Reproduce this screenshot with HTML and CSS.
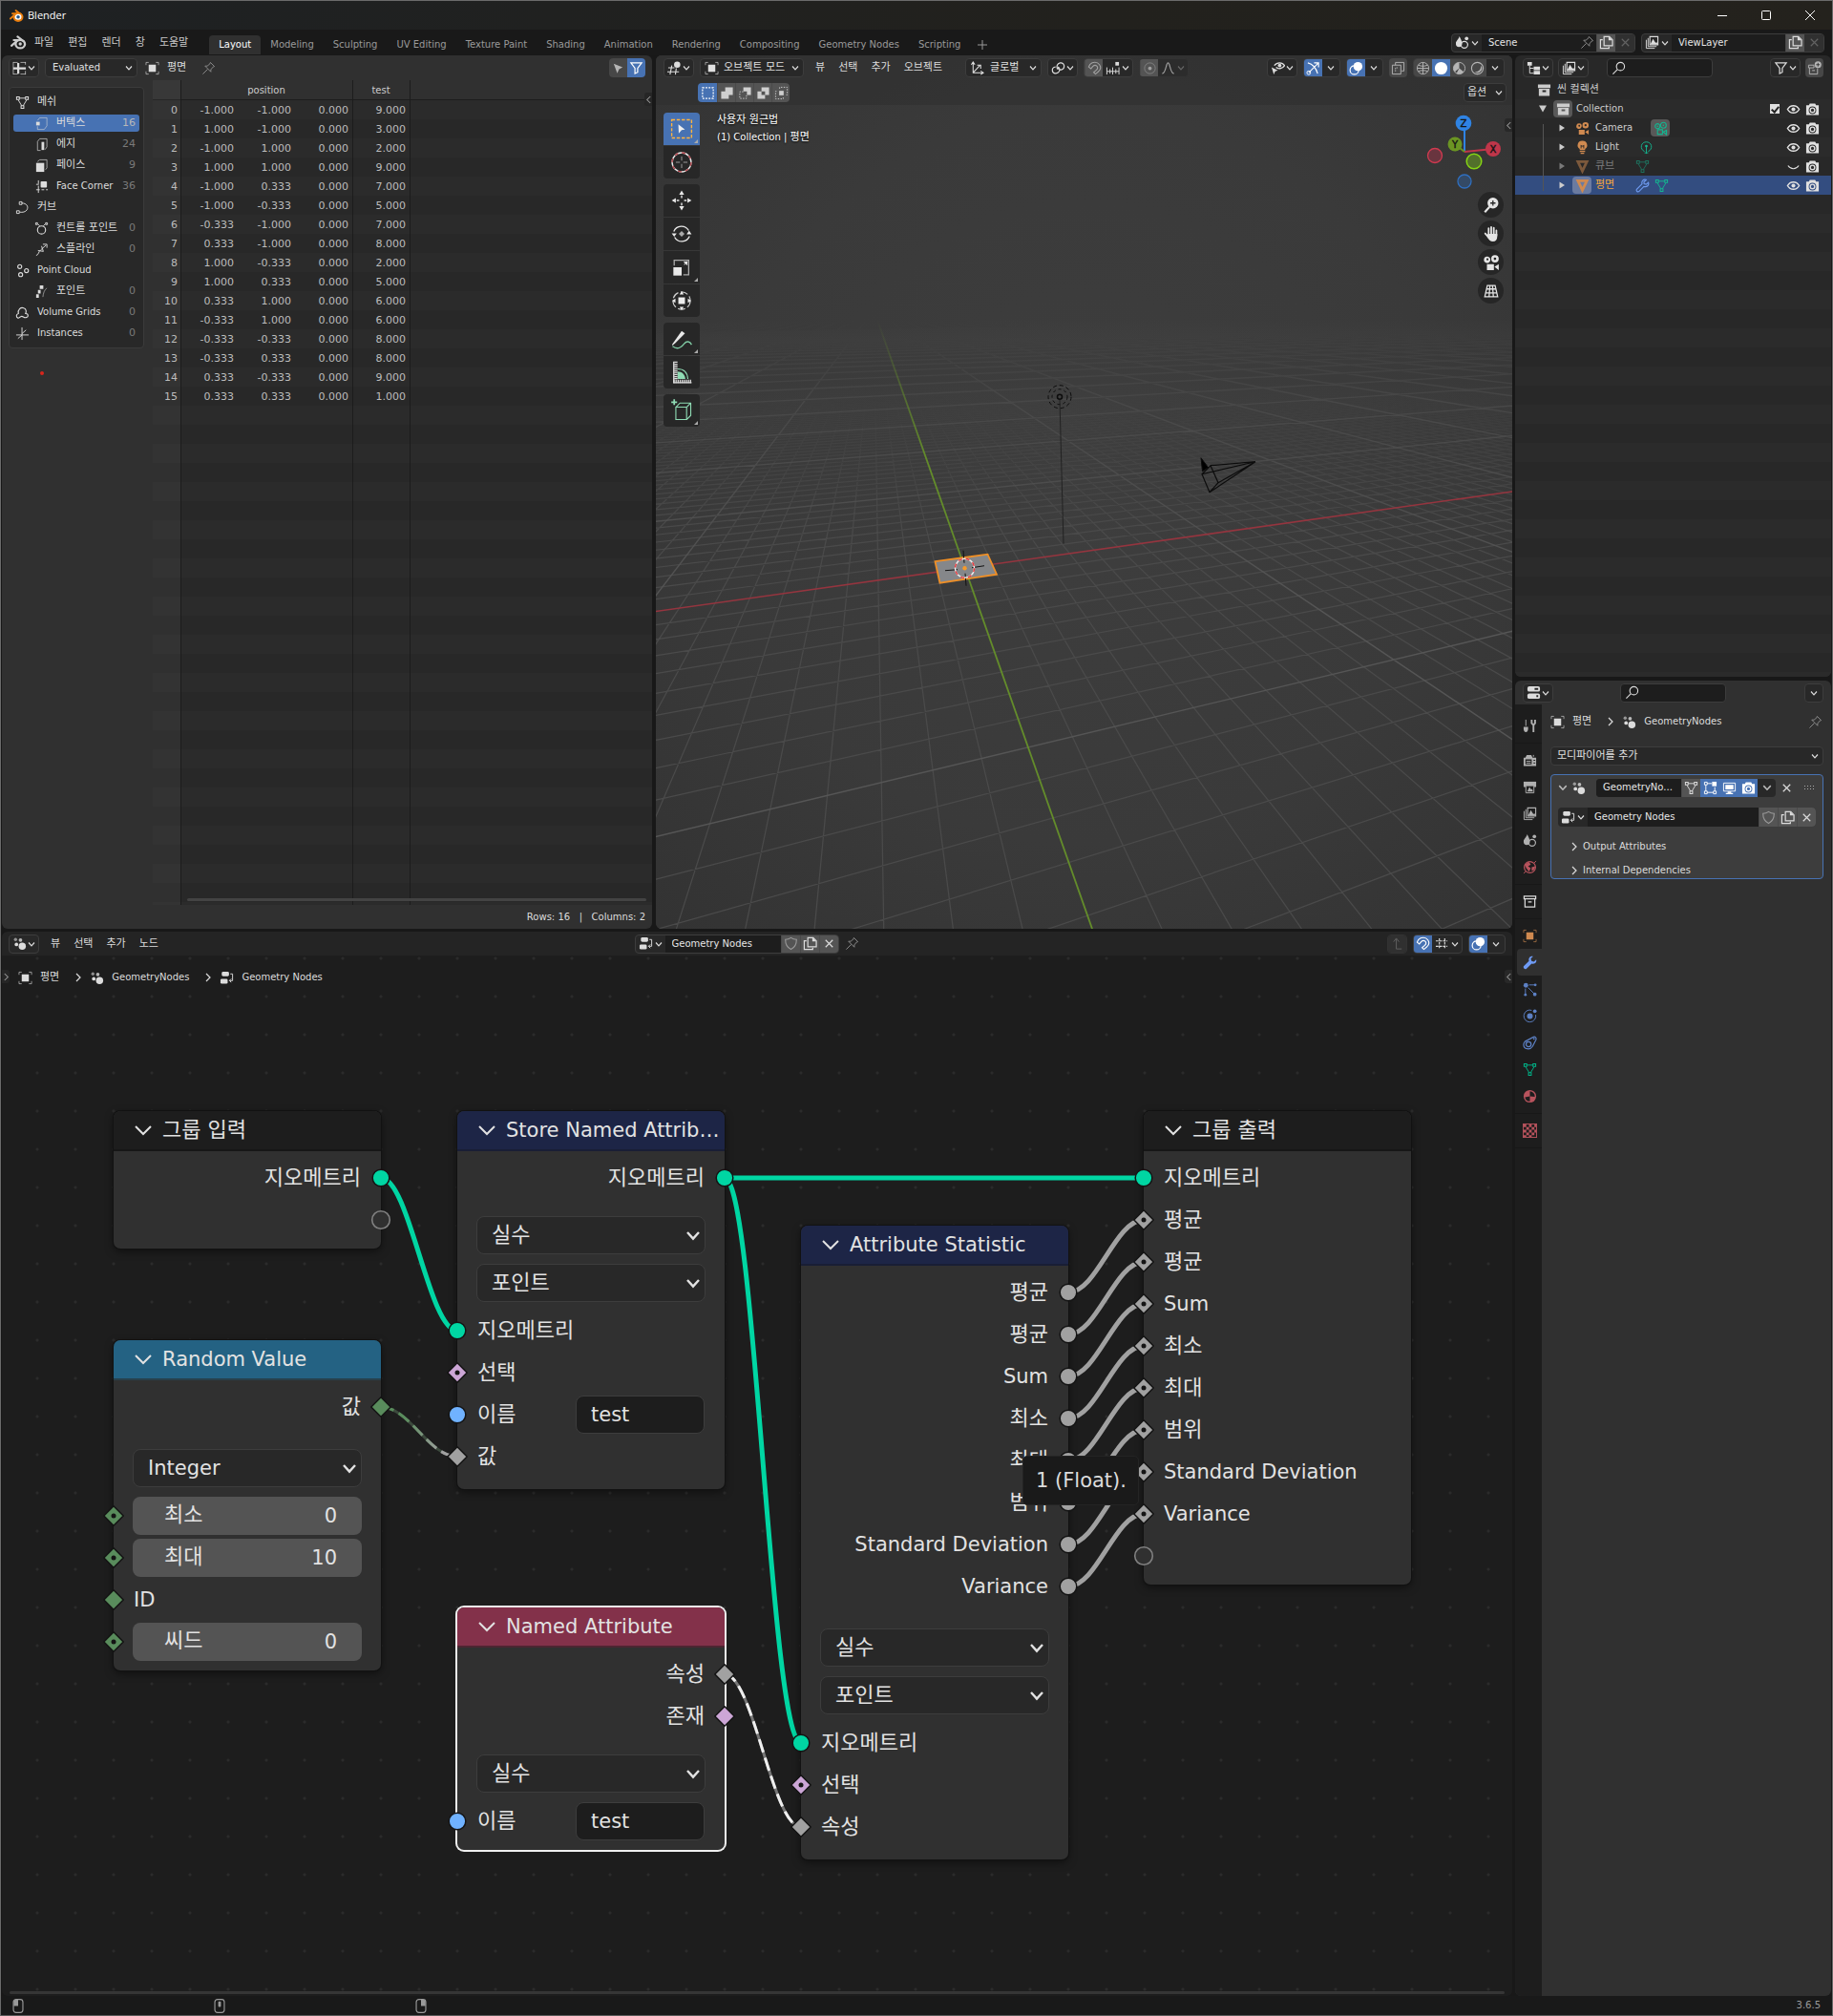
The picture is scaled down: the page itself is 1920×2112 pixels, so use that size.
FILE: index.html
```html
<!DOCTYPE html>
<html lang="ko">
<head>
<meta charset="utf-8">
<meta name="viewport" content="width=device-width, initial-scale=1">
<title>Blender</title>
<link rel="stylesheet" href="styles.css">
</head>
<body>
<svg class="sprite" aria-hidden="true">
  <symbol id="chev" viewBox="0 0 8 8"><path d="M1 2.5 4 5.8 7 2.5" fill="none" stroke="currentColor" stroke-width="1.2"/></symbol>
  <symbol id="chev-thin" viewBox="0 0 22 22"><path d="M3 7 11 15 19 7" fill="none" stroke="currentColor" stroke-width="2"/></symbol>
  <symbol id="chev-r" viewBox="0 0 8 10"><path d="M2 1 6 5 2 9" fill="none" stroke="currentColor" stroke-width="1.2"/></symbol>
  <symbol id="chev-l" viewBox="0 0 8 10"><path d="M6 1 2 5 6 9" fill="none" stroke="currentColor" stroke-width="1.2"/></symbol>
  <symbol id="blender" viewBox="0 0 16 16"><path d="M7 2.2 13 7M1 11.2 7.2 5.6H3.2" fill="none" stroke="currentColor" stroke-width="2" stroke-linecap="round" stroke-linejoin="round"/><ellipse cx="9.6" cy="9.6" rx="4.6" ry="4" fill="none" stroke="currentColor" stroke-width="2.2"/><circle cx="9.6" cy="9.4" r="1.6" fill="currentColor"/></symbol>
  <symbol id="blender-color" viewBox="0 0 16 16"><path d="M7 2.2 13 7M1 11.2 7.2 5.6H3.2" fill="none" stroke="#e87d0d" stroke-width="2" stroke-linecap="round" stroke-linejoin="round"/><ellipse cx="9.6" cy="9.4" rx="4.8" ry="4.3" fill="#fff" stroke="#e87d0d" stroke-width="2.2"/><circle cx="9.6" cy="9.4" r="1.9" fill="#265787"/></symbol>
  <symbol id="sheet" viewBox="0 0 16 16"><path d="M1 1v14M1 1.5h5M9 1.5h6M1 14.5h5M9 14.5h6M14.5 1v3M14.5 11v4" fill="none" stroke="currentColor" opacity=".7"/><path d="M1 8h14M6.5 2v12" stroke="currentColor" stroke-width="2.4"/></symbol>
  <symbol id="object" viewBox="0 0 16 16"><rect x="4" y="4" width="8" height="8" fill="currentColor"/><path d="M1 4.500V1.500h3M12 1.500h3v3M15 11.500v3h-3M4 14.500H1v-3" fill="none" stroke="currentColor" opacity=".65"/></symbol>
  <symbol id="pin" viewBox="0 0 16 16"><path d="M10 1.500 14.500 6 13 6.500 10.500 9.500 10.500 12 4 5.500 6.500 5.500 9.500 3zM7 9 1.500 14.500" fill="none" stroke="currentColor"/></symbol>
  <symbol id="arrow" viewBox="0 0 16 16"><path d="M3 3 13 7 9 9 7 13.500z" fill="currentColor"/></symbol>
  <symbol id="funnel" viewBox="0 0 16 16"><path d="M2 2h12l-4.500 6v4.500L6.500 14V8z" fill="none" stroke="currentColor" stroke-width="1.3"/></symbol>
  <symbol id="mesh" viewBox="0 0 16 16"><path d="M4.500 3h7M3.300 5 7.200 11.500M12.700 5 8.800 11.500" fill="none" stroke="currentColor"/><path d="M1.500 1.500h3v3h-3zM11.500 1.500h3v3h-3zM6.500 11.500h3v3h-3z" fill="none" stroke="currentColor" stroke-width="1.100"/></symbol>
  <symbol id="vert" viewBox="0 0 16 16"><path d="M3.500 4.500 6 1.500h8v9l-3 4H3.500V11" fill="none" stroke="currentColor" opacity=".6"/><rect x="2" y="6" width="4" height="4" fill="currentColor"/></symbol>
  <symbol id="edge" viewBox="0 0 16 16"><path d="M7 14.500H3.500V4.500L6 1.500h8v9l-2 3" fill="none" stroke="currentColor" opacity=".7"/><rect x="8" y="5" width="3" height="9" fill="currentColor"/></symbol>
  <symbol id="face" viewBox="0 0 16 16"><path d="M3.500 3.500 6 1.500h8v9l-1.500 2" fill="none" stroke="currentColor" opacity=".7"/><rect x="2" y="5" width="9" height="10" fill="currentColor"/></symbol>
  <symbol id="corner" viewBox="0 0 16 16"><path d="M4.500 1v4M2 5.500h3M4.500 7v8M2 11.500h4M8 11.500h3M13 11.500h2" fill="none" stroke="currentColor"/><rect x="7" y="2" width="7" height="7" rx="1" fill="currentColor"/></symbol>
  <symbol id="curve" viewBox="0 0 16 16"><path d="M7 3c6 0 8 4 6 7.500-1.500 2.500-5 3-8 2.500" fill="none" stroke="currentColor"/><path d="M4.500 1.500h3v3h-3zM1.500 11.500h3v3h-3z" fill="none" stroke="currentColor"/></symbol>
  <symbol id="cpoint" viewBox="0 0 16 16"><circle cx="8" cy="9.500" r="4.500" fill="none" stroke="currentColor" stroke-width="1.200"/><path d="M1.500 1.500h2v2h-2zM12.500 1.500h2v2h-2zM4 3l2 2M12 3l-2 2" fill="none" stroke="currentColor"/></symbol>
  <symbol id="spline" viewBox="0 0 16 16"><path d="M2 14.500C5 14 4.500 10 7 8.500M7 8.500 13 3M4 9l6 1M8 4l2 6M9.500 2H14v4" fill="none" stroke="currentColor"/></symbol>
  <symbol id="cloud" viewBox="0 0 16 16"><g fill="none" stroke="currentColor" stroke-width="1.200"><circle cx="5" cy="3.500" r="2.200"/><circle cx="12.500" cy="8" r="2.200"/><circle cx="6" cy="12.500" r="2.200"/></g></symbol>
  <symbol id="points" viewBox="0 0 16 16"><path d="M6 1h4v4H6zM4 6h3v4H4zM2 11h3v4H2z" fill="currentColor"/><path d="M14 4c-3 2-4 6-4.500 10" fill="none" stroke="currentColor" opacity=".6"/></symbol>
  <symbol id="volume" viewBox="0 0 16 16"><path d="M3 14C.5 13 1 9.500 3.500 9 2.500 5 6 1.500 9.500 3c3 1 3 4 2 6 3.500 0 3.500 4 .5 4.500C9 14 8.500 11 6 12.500 5 13 4 14.500 3 14z" fill="none" stroke="currentColor" stroke-width="1.200"/></symbol>
  <symbol id="inst" viewBox="0 0 16 16"><path d="M7.500 1v14M1 9.500h14M7.500 9.500 3 13.500M7.500 8 12 4" fill="none" stroke="currentColor"/></symbol>
  <symbol id="view3d" viewBox="0 0 16 16"><path d="M1 7.500h7M0 12h13M5 5 3 15M10 8l-1 7" fill="none" stroke="currentColor" stroke-width="1.200"/><circle cx="11" cy="4" r="3.500" fill="currentColor"/></symbol>
  <symbol id="orient" viewBox="0 0 16 16"><path d="M3.500 2v11h11M1.500 4l2-3 2 3M12 11l3 2-3 2M3.500 13 11 5M8 4.500h4v4" fill="none" stroke="currentColor" stroke-width="1.100"/></symbol>
  <symbol id="pivot" viewBox="0 0 16 16"><path d="M5 6.500C2 6.500 1 9 1.500 11c.5 3 5.500 4 7.500.5 1-2 0-4-1.500-5M7 9C5.500 6 7 2.500 10 2c3-.5 5 2 4.500 4.500C14 9 12 10 10 9.500" fill="none" stroke="currentColor" stroke-width="1.300"/><circle cx="8" cy="8" r="1.300" fill="currentColor"/></symbol>
  <symbol id="magnet" viewBox="0 0 16 16"><path d="M1.500 6.500 3 3.500C6 .5 11 .5 13.500 4c2 3 1 6-1.500 8l-3 2.500-2-2L10 10c1.500-1.500 2-3 .5-4.500-1.500-1.300-3-1-4.500.5L4 8.500z" fill="none" stroke="currentColor" stroke-width="1.200"/></symbol>
  <symbol id="snapinc" viewBox="0 0 16 16"><path d="M1.500 7v8M5 9v5M8 7v8M11.500 9v5M15 7v8M1.500 11.500H15" fill="none" stroke="currentColor"/><rect x="11" y="1" width="4" height="4" fill="currentColor"/></symbol>
  <symbol id="prop" viewBox="0 0 16 16"><circle cx="8" cy="8" r="6" fill="none" stroke="currentColor" opacity=".6"/><circle cx="8" cy="8" r="2" fill="currentColor"/></symbol>
  <symbol id="falloff" viewBox="0 0 16 16"><path d="M1.500 14C6 13 5.500 2 8 2s2 11 6.500 12" fill="none" stroke="currentColor" stroke-width="1.200"/></symbol>
  <symbol id="eyecur" viewBox="0 0 16 16"><path d="M4 5C7 1 13 1 15.500 5 13 9 8 9 6 7" fill="none" stroke="currentColor" stroke-width="1.400"/><circle cx="10" cy="4.800" r="2" fill="currentColor"/><path d="M1 7 8 10.500 5 11.500 3.500 15z" fill="currentColor"/></symbol>
  <symbol id="gizmo" viewBox="0 0 16 16"><path d="M3 13 14 2M9 2h5v5M2 2c4 1 9 5 11 12" fill="none" stroke="currentColor" stroke-width="1.200"/><circle cx="3" cy="13" r="2" fill="none" stroke="currentColor"/></symbol>
  <symbol id="overlay" viewBox="0 0 16 16"><circle cx="10" cy="6" r="5" fill="currentColor"/><circle cx="6" cy="10" r="4.800" fill="none" stroke="currentColor" stroke-width="1.300"/></symbol>
  <symbol id="xray" viewBox="0 0 16 16"><path d="M5 4.500V1.500h9.500V11H12" fill="none" stroke="currentColor"/><path d="M1.500 4.500H11v10H1.500z" fill="none" stroke="currentColor"/><path d="M5 11.500V7.500h3" fill="none" stroke="currentColor" stroke-dasharray="1.500 1"/></symbol>
  <symbol id="wire" viewBox="0 0 16 16"><g fill="none" stroke="currentColor"><circle cx="8" cy="8" r="6.500"/><path d="M1.500 8h13M8 1.500v13M3 4.500c3 1.500 7 1.500 10 0M3 11.500c3-1.500 7-1.500 10 0"/></g></symbol>
  <symbol id="solid" viewBox="0 0 16 16"><circle cx="8" cy="8" r="7" fill="currentColor"/></symbol>
  <symbol id="matp" viewBox="0 0 16 16"><circle cx="8" cy="8" r="6.500" fill="none" stroke="currentColor"/><path d="M8 1.500A6.500 6.500 0 0 0 3 12L8 8zM8 8l5 4a6.500 6.500 0 0 1-8 1.500z" fill="currentColor"/></symbol>
  <symbol id="rendered" viewBox="0 0 16 16"><circle cx="8" cy="8" r="6.500" fill="none" stroke="currentColor" stroke-width="1.200"/><path d="M12 5c0 5-3 7-7 7a5 5 0 0 0 7-7z" fill="currentColor"/></symbol>
  <symbol id="s-new" viewBox="0 0 16 16"><rect x="2" y="2" width="12" height="12" fill="none" stroke="currentColor" stroke-width="1.300" stroke-dasharray="2 1.400"/></symbol>
  <symbol id="s-add" viewBox="0 0 16 16"><path d="M6 1.500h8.500V10H10v4.500H1.500V6H6z" fill="currentColor"/></symbol>
  <symbol id="s-sub" viewBox="0 0 16 16"><path d="M6 1.500h8.500V10H10V6H6z" fill="currentColor"/><path d="M6 6.500H2v7.500h7.500V10" fill="none" stroke="currentColor" stroke-dasharray="1.500 1.500"/></symbol>
  <symbol id="s-inv" viewBox="0 0 16 16"><path fill-rule="evenodd" d="M6 1.500h8.500V10H10v4.500H1.500V6H6zM6 6v4h4V6z" fill="currentColor"/></symbol>
  <symbol id="s-int" viewBox="0 0 16 16"><rect x="5.500" y="5.500" width="5" height="5" fill="currentColor"/><path d="M6 3V1.500h8.500V10H12M10 13v1.500H1.500V6H4" fill="none" stroke="currentColor" stroke-dasharray="1.500 1.500"/></symbol>
  <symbol id="scene" viewBox="0 0 16 16"><path d="M5 1C7 5 8 7 8 9a3.500 4 0 0 1-7 0C1 6 4 5 5 1z" fill="currentColor"/><circle cx="13" cy="3.500" r="2" fill="currentColor"/><circle cx="10.500" cy="10.500" r="3.800" fill="none" stroke="currentColor" stroke-width="1.300"/></symbol>
  <symbol id="copy" viewBox="0 0 16 16"><path d="M5.500 1.500h6L15 5v6.500H5.500z" fill="none" stroke="currentColor" stroke-width="1.300"/><path d="M10.500 1v4.500H15z" fill="currentColor"/><path d="M4 5H1.500v9.500H11V12.500" fill="none" stroke="currentColor" stroke-width="1.300"/></symbol>
  <symbol id="x" viewBox="0 0 16 16"><path d="M4 4l8 8M12 4l-8 8" stroke="currentColor" stroke-width="1.300"/></symbol>
  <symbol id="layers" viewBox="0 0 16 16"><path d="M5.500 1.500h9v9h-9z" fill="none" stroke="currentColor" stroke-width="1.200"/><path d="M6 10l3-6 3 4.500 1-1 1.500 2.500z" fill="currentColor"/><path d="M3.500 3v9.500H13M1.500 5v9.500H11" fill="none" stroke="currentColor"/></symbol>
  <symbol id="tree" viewBox="0 0 16 16"><path d="M1 1h5v4H1zM8 6h7v4H8zM8 11h7v4H8z" fill="currentColor"/><path d="M3.500 5v8.500H8M3.500 8H8" fill="none" stroke="currentColor"/></symbol>
  <symbol id="search" viewBox="0 0 16 16"><circle cx="10" cy="6" r="4.500" fill="none" stroke="currentColor" stroke-width="1.200"/><path d="M6.500 9.500 1.500 14.500" stroke="currentColor" stroke-width="1.200"/></symbol>
  <symbol id="newcol" viewBox="0 0 16 16"><path d="M2.500 7.500V14.500h9V8M1.500 4.500h6v3h-6zM5.500 10.500h3" fill="none" stroke="currentColor"/><circle cx="12" cy="4" r="3.800" fill="currentColor"/><path d="M12 2v4M10 4h4" stroke="#333"/></symbol>
  <symbol id="coll" viewBox="0 0 16 16"><path d="M1 1.500h14v4H1z" fill="currentColor"/><path fill-rule="evenodd" d="M2 6.500h12v8H2zM6 8v2h4V8z" fill="currentColor"/></symbol>
  <symbol id="coll-o" viewBox="0 0 16 16"><path d="M1.500 2h13v3h-13zM2.500 5v9h11V5M6 8.500h4" fill="none" stroke="currentColor" stroke-width="1.300"/></symbol>
  <symbol id="tri-d" viewBox="0 0 8 10"><path d="M0 1.500h8L4 8.500z" fill="currentColor"/></symbol>
  <symbol id="tri-r" viewBox="0 0 8 10"><path d="M1.500 1.500 7 5 1.500 8.500z" fill="currentColor"/></symbol>
  <symbol id="cam" viewBox="0 0 16 16"><path fill-rule="evenodd" d="M4.500 2.500a3 3 0 1 1-1 5.900 3 3 0 0 1 1-5.900zM3.500 5a1 1 0 1 0 2 0 1 1 0 0 0-2 0zM11.500 1a3.500 3.500 0 1 1 0 7 3.500 3.500 0 0 1 0-7zM10.300 4.500a1.200 1.200 0 1 0 2.400 0 1.200 1.200 0 0 0-2.400 0z" fill="currentColor"/><path d="M4 9.500h6.500V15H4zM11 12l4-2.500V15z" fill="currentColor"/></symbol>
  <symbol id="cam-o" viewBox="0 0 16 16"><g fill="none" stroke="currentColor" stroke-width="1.200"><circle cx="4.500" cy="5.500" r="2.700"/><circle cx="11" cy="4.500" r="3.200"/><path d="M4.500 9.500H10V14.500H4.500zM11 12l3.500-2v5z"/></g><circle cx="4.500" cy="5.500" r=".8" fill="currentColor"/><circle cx="11" cy="4.500" r=".8" fill="currentColor"/></symbol>
  <symbol id="bulb" viewBox="0 0 16 16"><path fill-rule="evenodd" d="M8 .5a5 5 0 0 1 3 9.200V11H5V9.700A5 5 0 0 1 8 .5zM6 5v4h1V7h2v2h1V5L8 6z" fill="currentColor"/><path d="M5 12.500h6M6 14.500h4" stroke="currentColor" stroke-width="1.300"/></symbol>
  <symbol id="bulb-o" viewBox="0 0 16 16"><path d="M6 12.500C3 11 2 8.500 2.500 6c1-5.500 10-5.500 11 0 .5 2.500-.5 5-3.500 6.500M8 6v9M6 14h4" fill="none" stroke="currentColor"/><circle cx="8" cy="6.500" r="1.500" fill="currentColor"/></symbol>
  <symbol id="tri-o" viewBox="0 0 16 16"><path d="M3 2.500h10L8 13z" fill="none" stroke="currentColor" stroke-width="3"/></symbol>
  <symbol id="wrench" viewBox="0 0 16 16"><path d="M14.500 4.500 12 6.500 9.800 6 9.500 4 12 1.500C9 .5 6.500 3 7.500 6L1.500 12c-1 2 1 3.500 2.500 2.500L9.500 9c3.500 1 6-1.500 5-4.500z" fill="none" stroke="currentColor" stroke-width="1.200"/></symbol>
  <symbol id="wrench-f" viewBox="0 0 16 16"><path d="M15 4.500 12.500 7 9.800 6.200 9 3.500 11.500 1C8.500.2 6 3 7 6L1 12c-1 2 1.500 4 3 3L10 9c3.500 1 6-1.500 5-4.500z" fill="currentColor"/></symbol>
  <symbol id="eye" viewBox="0 0 16 16"><path d="M1.500 8C4.500 2.500 11.500 2.500 14.500 8 11.500 13.500 4.500 13.500 1.500 8z" fill="none" stroke="currentColor" stroke-width="1.600"/><circle cx="8" cy="8" r="2.200" fill="currentColor"/></symbol>
  <symbol id="eye-c" viewBox="0 0 16 16"><path d="M2 7c3 4.500 9 4.500 12 0" fill="none" stroke="currentColor" stroke-width="1.200"/></symbol>
  <symbol id="photo" viewBox="0 0 16 16"><path fill-rule="evenodd" d="M1 3.500h3L5 1.500h6l1 2h3V14.500H1zM8 4.800a4.200 4.200 0 1 0 0 8.400 4.200 4.200 0 0 0 0-8.400z" fill="currentColor"/><circle cx="8" cy="9" r="2.500" fill="none" stroke="currentColor" stroke-width="1.500"/></symbol>
  <symbol id="props" viewBox="0 0 16 16"><rect x="1" y="1" width="14" height="6" rx="2" fill="currentColor"/><rect x="1" y="9" width="14" height="6" rx="2" fill="currentColor"/><path d="M9 3h4v2H9zM11 11h2v2h-2z" fill="#282828"/></symbol>
  <symbol id="tools" viewBox="0 0 16 16"><path d="M3.500 1v7" stroke="currentColor"/><path d="M13.800 1v4L12 7v8M10 1v4l2 2" fill="none" stroke="currentColor" stroke-width="2"/><path d="M1 9h5v2c0 2.500-1 4-2.500 4S1 13.500 1 11z" fill="currentColor"/></symbol>
  <symbol id="render" viewBox="0 0 16 16"><path fill-rule="evenodd" d="M1 5h2l1.500-3h5L11 5h4v9.500H1zM3 7v5.500h7V7z" fill="currentColor"/><path d="M4 9h5M4 11h5M12 2v2" stroke="currentColor"/><path d="M12 8h2M12 11h2" stroke="#1d1d1d"/></symbol>
  <symbol id="output" viewBox="0 0 16 16"><path d="M1 2h14v6H1z" fill="currentColor"/><path d="M3.500 6.500h9V14.500h-9z" fill="#1d1d1d" stroke="currentColor"/><path d="M5 13l2.500-5 2 3 1-1 1 3z" fill="currentColor"/></symbol>
  <symbol id="world" viewBox="0 0 16 16"><circle cx="8" cy="8" r="6.300" fill="none" stroke="currentColor" stroke-width="1.300"/><path d="M2 5 7 2l2 3-3 2 3 2-2 4-3-4zM10 8l4-1-1 4-3 1z" fill="currentColor"/><path d="M12.500 3.500 15 1M3.500 12.500 1 15" stroke="currentColor"/></symbol>
  <symbol id="parts" viewBox="0 0 16 16"><circle cx="3.500" cy="3.500" r="2.600" fill="currentColor"/><circle cx="14" cy="3" r="1.500" fill="currentColor"/><circle cx="3" cy="14" r="1.500" fill="currentColor"/><circle cx="13.500" cy="13.500" r="2" fill="currentColor"/><path d="M7 3h6M3 7v6M6 6l7 7" stroke="currentColor"/></symbol>
  <symbol id="phys" viewBox="0 0 16 16"><circle cx="8" cy="8" r="3.200" fill="currentColor"/><circle cx="13.500" cy="2.500" r="2" fill="currentColor"/><path d="M10 1.500A6.700 6.700 0 1 0 14.500 6.500" fill="none" stroke="currentColor"/></symbol>
  <symbol id="constr" viewBox="0 0 16 16"><path d="M2.500 6.500 12 1.500c2-.7 3.500 1 2.800 3L11 12C8 16.500 1 15 1 10c0-1.500.5-2.500 1.500-3.500z" fill="none" stroke="currentColor" stroke-width="1.300"/><circle cx="6.500" cy="9.500" r="2.800" fill="none" stroke="currentColor" stroke-width="1.400"/><circle cx="12.500" cy="3.500" r="1" fill="currentColor"/></symbol>
  <symbol id="mater" viewBox="0 0 16 16"><circle cx="8" cy="8" r="7" fill="currentColor"/><path d="M8 2.500a5.500 5.500 0 0 1 5.500 6L8 8zM8 8v5.500A5.500 5.500 0 0 1 2.500 9z" fill="#1d1d1d"/></symbol>
  <symbol id="texture" viewBox="0 0 16 16"><rect x=".5" y=".5" width="15" height="15" fill="none" stroke="currentColor"/><path d="M1 1h3v3H1zM7 1h3v3H7zM13 1h2v3h-2zM4 4h3v3H4zM10 4h3v3h-3zM1 7h3v3H1zM7 7h3v3H7zM13 7h2v3h-2zM4 10h3v3H4zM10 10h3v3h-3zM1 13h3v2H1zM7 13h3v2H7z" fill="currentColor"/></symbol>
  <symbol id="geo" viewBox="0 0 16 16"><circle cx="11" cy="11" r="4" fill="currentColor"/><circle cx="4.500" cy="9" r="2" fill="currentColor"/><circle cx="9" cy="4" r="2" fill="currentColor" opacity=".8"/><circle cx="3.500" cy="3.500" r="1.800" fill="currentColor" opacity=".6"/></symbol>
  <symbol id="ntree" viewBox="0 0 16 16"><rect x="2.500" y="1" width="8" height="5" rx="1.500" fill="currentColor"/><rect x="1" y="9" width="8" height="5.500" rx="1.500" fill="currentColor"/><path d="M12 3.500h2.500V11H11M13 9l-2 2 2 2" fill="none" stroke="currentColor"/></symbol>
  <symbol id="shield" viewBox="0 0 16 16"><path d="M8 1.500C6 3 4 3.500 1.800 3.500c0 6 2 9 6.200 11 4.200-2 6.200-5 6.200-11C12 3.500 10 3 8 1.500z" fill="none" stroke="currentColor" stroke-width="1.200"/></symbol>
  <symbol id="edit" viewBox="0 0 16 16"><path d="M4.500 3h5M3 4.500v7M4.500 13h7M13 7v4.500" stroke="currentColor"/><path d="M1.500 1.500h3v3h-3zM1.500 11.500h3v3h-3zM11.500 11.500h3v3h-3z" fill="none" stroke="currentColor"/><rect x="10" y="1" width="5" height="5" fill="#fff"/></symbol>
  <symbol id="monitor" viewBox="0 0 16 16"><path d="M1.500 2.500h13v9h-13z" fill="none" stroke="currentColor"/><path d="M3.500 4.500h9v5h-9zM6 12h4v1.500h2V15H4v-1.500h2z" fill="currentColor"/></symbol>
  <symbol id="parent" viewBox="0 0 16 16"><path d="M13 14H7V3M4 6l3-4 3 4" fill="none" stroke="currentColor"/></symbol>
  <symbol id="gsnap" viewBox="0 0 16 16"><path d="M5 2v12M11 2v12M1 5h13M1 11h13" stroke="currentColor" stroke-width="1.200" stroke-dasharray="3 1"/></symbol>
  <symbol id="m-l" viewBox="0 0 12 16"><rect x=".7" y=".7" width="10.600" height="14.600" rx="3" fill="none" stroke="currentColor" stroke-width="1.200"/><path d="M1 8V3q0-2 2-2h3v7z" fill="currentColor"/></symbol>
  <symbol id="m-m" viewBox="0 0 12 16"><rect x=".7" y=".7" width="10.600" height="14.600" rx="3" fill="none" stroke="currentColor" stroke-width="1.200"/><rect x="4.500" y="3" width="3" height="6" rx="1" fill="currentColor"/></symbol>
  <symbol id="m-r" viewBox="0 0 12 16"><rect x=".7" y=".7" width="10.600" height="14.600" rx="3" fill="none" stroke="currentColor" stroke-width="1.200"/><path d="M11 8V3q0-2-2-2H6v7z" fill="currentColor"/></symbol>
  <symbol id="t-sel" viewBox="0 0 30 30"><rect x="3" y="4" width="24" height="22" fill="none" stroke="#ffb340" stroke-width="1.600" stroke-dasharray="4 2"/><path d="M11 9.500 19 16 15 16.500 11.500 20.500z" fill="#eee"/></symbol>
  <symbol id="t-cur" viewBox="0 0 30 30"><circle cx="15" cy="15" r="11.500" fill="none" stroke="#e8e8e8" stroke-width="1.600"/><circle cx="15" cy="15" r="11.500" fill="none" stroke="#b5484f" stroke-width="1.600" stroke-dasharray="4.500 4.500"/><path d="M15 8v5M15 17v5M8 15h5M17 15h5" stroke="#aaa"/></symbol>
  <symbol id="t-move" viewBox="0 0 30 30"><path d="M15 3l3 5h-6zM15 27l3-5h-6zM3 15l5-3v6zM27 15l-5-3v6z" fill="#e8e8e8"/><path d="M15 9v3M15 18v3M9 15h3M18 15h3" stroke="#e8e8e8" stroke-width="1.600"/></symbol>
  <symbol id="t-rot" viewBox="0 0 30 30"><path d="M5.500 12a10 10 0 0 1 18-1M24.500 18a10 10 0 0 1-18 1" fill="none" stroke="#e8e8e8" stroke-width="1.500"/><path d="M3 14.500h6L6 18.500zM27 15.500h-6L24 11z" fill="#e8e8e8"/><path d="M15 11.500l3.500 3.500-3.500 3.500-3.500-3.500z" fill="#aaa"/></symbol>
  <symbol id="t-scale" viewBox="0 0 30 30"><path d="M6 13V6.500h17.500V24H17M18 12l4-4" fill="none" stroke="#aaa" stroke-width="1.500"/><rect x="5" y="15" width="10" height="10" fill="#e8e8e8"/><path d="M22 8v5l-5-5z" fill="#e8e8e8"/></symbol>
  <symbol id="t-xf" viewBox="0 0 30 30"><circle cx="15" cy="15" r="10.500" fill="none" stroke="#ccc" stroke-width="1.300" stroke-dasharray="9 3"/><rect x="11" y="11" width="8" height="8" fill="#eee"/><path d="M15 3.500l2.500 4h-5zM15 26.500l2.500-4h-5zM3.500 15l4-2.500v5zM26.500 15l-4-2.500v5z" fill="#eee"/></symbol>
  <symbol id="t-note" viewBox="0 0 30 30"><path d="M4 24C11 29 15 25 18 21s7-3 9 1" fill="none" stroke="#7fcba4" stroke-width="1.600"/><path d="M4 21 15 5.500l4 3L7.500 20 3.500 23.500z" fill="#e8e8e8"/></symbol>
  <symbol id="t-meas" viewBox="0 0 30 30"><path d="M10 23V14c6 0 9 4 9.500 9z" fill="#8fdbb4"/><path d="M10 11c8 0 12 5 12.500 12" fill="none" stroke="#8fdbb4" stroke-width="1.300"/><path d="M5.500 2v26" stroke="#ddd" stroke-width="1.600"/><path d="M8 2v22" stroke="#ddd" stroke-width="4" stroke-dasharray="1.500 1"/><path d="M5 26h22" stroke="#ddd" stroke-width="4" stroke-dasharray="1.500 1"/><path d="M5 27.500h22" stroke="#ddd" stroke-width="1.400"/></symbol>
  <symbol id="t-cube" viewBox="0 0 30 30"><path d="M8 11h13v15H8zM8 11l5-5h13v15l-5 5M21 11l5-5" fill="none" stroke="#8fdbb4" stroke-width="1.300"/><path d="M6 1.500v7M2.500 5h7" stroke="#8fdbb4" stroke-width="2"/></symbol>
  <symbol id="zoom" viewBox="0 0 20 20"><circle cx="12" cy="7.500" r="6.300" fill="currentColor"/><path d="M8 12 2.500 18" stroke="currentColor" stroke-width="2.400"/><path d="M12 4.500v6M9 7.500h6" stroke="#262626" stroke-width="1.400"/></symbol>
  <symbol id="hand" viewBox="0 0 20 20"><path d="M7 11V3.500M10 10V2M13 11V3M16 12V6M3 9.500 7 14" fill="none" stroke="currentColor" stroke-width="2" stroke-linecap="round"/><path d="M6 10h11v3c0 4-2 6-5 6s-5-2-7-6z" fill="currentColor"/></symbol>
  <symbol id="persp" viewBox="0 0 20 20"><path d="M5.500 3.500h9l3 13h-15zM4.500 7.500h11M3.500 12h13M8.500 3.500l-1 13M11.500 3.500l1 13" fill="none" stroke="currentColor" stroke-width="1.400"/></symbol>
  <symbol id="k-c" viewBox="0 0 22 22"><circle cx="11" cy="11" r="8.800" fill="currentColor" stroke="#141414" stroke-width="1.500"/></symbol>
  <symbol id="k-d" viewBox="0 0 22 22"><path d="M11 .8 21.200 11 11 21.200.8 11z" fill="currentColor" stroke="#141414" stroke-width="1.500"/></symbol>
  <symbol id="k-dd" viewBox="0 0 22 22"><path d="M11 .8 21.200 11 11 21.200.8 11z" fill="currentColor" stroke="#141414" stroke-width="1.500"/><circle cx="11" cy="11" r="2.500" fill="#141414"/></symbol>
  <symbol id="k-e" viewBox="0 0 22 22"><circle cx="11" cy="11" r="9.300" fill="#303030" stroke="#808080" stroke-width="1.600"/></symbol>
</svg>

<div class="app">
  <header class="titlebar">
    <svg class="i"><use href="#blender-color"/></svg><h1>Blender</h1>
    <div class="winbtns">
      <button aria-label="최소화"><svg viewBox="0 0 12 12"><path d="M1 6.500h10" stroke="#fff"/></svg></button>
      <button aria-label="최대화"><svg viewBox="0 0 12 12"><rect x="1.500" y="1.500" width="9" height="9" rx="1" fill="none" stroke="#fff"/></svg></button>
      <button aria-label="닫기"><svg viewBox="0 0 12 12"><path d="M1 1l10 10M11 1 1 11" stroke="#fff"/></svg></button>
    </div>
  </header>

  <div class="topbar">
    <nav class="mainmenu ko">
      <button aria-label="Blender"><svg class="i"><use href="#blender"/></svg></button>
      <button>파일</button><button>편집</button><button>렌더</button><button>창</button><button>도움말</button>
    </nav>
    <nav class="tabs">
      <button class="on">Layout</button><button>Modeling</button><button>Sculpting</button><button>UV Editing</button><button>Texture Paint</button><button>Shading</button><button>Animation</button><button>Rendering</button><button>Compositing</button><button>Geometry Nodes</button><button>Scripting</button><button class="plus" aria-label="추가"><svg viewBox="0 0 10 10"><path d="M5 0v10M0 5h10" stroke="currentColor"/></svg></button>
    </nav>
    <div class="datablocks">
      <div class="grp">
        <button class="w31" aria-label="Scene"><svg class="i"><use href="#scene"/></svg><svg class="c"><use href="#chev"/></svg></button>
        <input class="name" aria-label="Scene" value="Scene">
        <button class="w20 pinned" aria-label="고정"><svg class="i dim"><use href="#pin"/></svg></button>
        <button class="w20 lit" aria-label="복사"><svg class="i"><use href="#copy"/></svg></button>
        <button class="w20 off" aria-label="삭제"><svg class="i"><use href="#x"/></svg></button>
      </div>
      <div class="grp">
        <button class="w31" aria-label="ViewLayer"><svg class="i"><use href="#layers"/></svg><svg class="c"><use href="#chev"/></svg></button>
        <input class="name long" aria-label="ViewLayer" value="ViewLayer">
        <button class="w20 lit" aria-label="복사"><svg class="i"><use href="#copy"/></svg></button>
        <button class="w20 off" aria-label="삭제"><svg class="i"><use href="#x"/></svg></button>
      </div>
    </div>
  </div>

  <main class="work">
    <div class="left">
      <div class="upper">
        <section class="area sheet">
          <div class="bar">
            <button class="ib" aria-label="Spreadsheet"><svg class="i"><use href="#sheet"/></svg><svg class="c"><use href="#chev"/></svg></button>
            <span class="drop eval"><select aria-label="Evaluated"><option>Evaluated</option></select><svg class="c"><use href="#chev"/></svg></span>
            <span class="crumb"><svg class="i"><use href="#object"/></svg><span class="ko">평면</span></span>
            <button class="bare" aria-label="고정"><svg class="i dim"><use href="#pin"/></svg></button>
            <div class="grp push plain">
              <button class="w19 mid" aria-label="선택"><svg class="i"><use href="#arrow"/></svg></button>
              <button class="w19 blue" aria-label="필터"><svg class="i"><use href="#funnel"/></svg></button>
            </div>
          </div>
          <div class="sheetbody">
            <div class="side">
              <ul class="domains">
                <li><svg class="i"><use href="#mesh"/></svg><span class="ko">메쉬</span></li>
                <li class="sub sel"><svg class="i"><use href="#vert"/></svg><span class="ko">버텍스</span><b>16</b></li>
                <li class="sub"><svg class="i"><use href="#edge"/></svg><span class="ko">에지</span><b>24</b></li>
                <li class="sub"><svg class="i"><use href="#face"/></svg><span class="ko">페이스</span><b>9</b></li>
                <li class="sub"><svg class="i"><use href="#corner"/></svg><span>Face Corner</span><b>36</b></li>
                <li><svg class="i"><use href="#curve"/></svg><span class="ko">커브</span></li>
                <li class="sub"><svg class="i"><use href="#cpoint"/></svg><span class="ko">컨트롤 포인트</span><b>0</b></li>
                <li class="sub"><svg class="i"><use href="#spline"/></svg><span class="ko">스플라인</span><b>0</b></li>
                <li><svg class="i"><use href="#cloud"/></svg><span>Point Cloud</span></li>
                <li class="sub"><svg class="i"><use href="#points"/></svg><span class="ko">포인트</span><b>0</b></li>
                <li><svg class="i"><use href="#volume"/></svg><span>Volume Grids</span><b>0</b></li>
                <li><svg class="i"><use href="#inst"/></svg><span>Instances</span><b>0</b></li>
              </ul>
              <div class="reddot"></div>
            </div>
            <div class="tablewrap">
              <table>
                <thead><tr><th class="c0"></th><th class="cpos" colspan="3">position</th><th class="ct">test</th></tr></thead>
                <tbody>
                <tr><th>0</th><td>-1.000</td><td>-1.000</td><td>0.000</td><td>9.000</td></tr>
                <tr><th>1</th><td>1.000</td><td>-1.000</td><td>0.000</td><td>3.000</td></tr>
                <tr><th>2</th><td>-1.000</td><td>1.000</td><td>0.000</td><td>2.000</td></tr>
                <tr><th>3</th><td>1.000</td><td>1.000</td><td>0.000</td><td>9.000</td></tr>
                <tr><th>4</th><td>-1.000</td><td>0.333</td><td>0.000</td><td>7.000</td></tr>
                <tr><th>5</th><td>-1.000</td><td>-0.333</td><td>0.000</td><td>5.000</td></tr>
                <tr><th>6</th><td>-0.333</td><td>-1.000</td><td>0.000</td><td>7.000</td></tr>
                <tr><th>7</th><td>0.333</td><td>-1.000</td><td>0.000</td><td>8.000</td></tr>
                <tr><th>8</th><td>1.000</td><td>-0.333</td><td>0.000</td><td>2.000</td></tr>
                <tr><th>9</th><td>1.000</td><td>0.333</td><td>0.000</td><td>5.000</td></tr>
                <tr><th>10</th><td>0.333</td><td>1.000</td><td>0.000</td><td>6.000</td></tr>
                <tr><th>11</th><td>-0.333</td><td>1.000</td><td>0.000</td><td>6.000</td></tr>
                <tr><th>12</th><td>-0.333</td><td>-0.333</td><td>0.000</td><td>8.000</td></tr>
                <tr><th>13</th><td>-0.333</td><td>0.333</td><td>0.000</td><td>8.000</td></tr>
                <tr><th>14</th><td>0.333</td><td>-0.333</td><td>0.000</td><td>9.000</td></tr>
                <tr><th>15</th><td>0.333</td><td>0.333</td><td>0.000</td><td>1.000</td></tr>
                </tbody>
              </table>
              <div class="hscroll"></div>
            </div>
          </div>
          <footer class="count">Rows: 16 &nbsp; | &nbsp; Columns: 2</footer>
          <button class="flap high" aria-label="사이드바"><svg><use href="#chev-l"/></svg></button>
        </section>

        <section class="area view">
          <svg class="scene3d" viewBox="687 58 897 916" preserveAspectRatio="xMidYMid slice" aria-hidden="true">
            <defs>
              <radialGradient id="bg" gradientUnits="userSpaceOnUse" cx="1135" cy="500" r="640"><stop offset="0" stop-color="#3e3e3e"/><stop offset=".6" stop-color="#3a3a3a"/><stop offset="1" stop-color="#333"/></radialGradient>
              <linearGradient id="fade-minor" gradientUnits="userSpaceOnUse" x1="0" x2="0" y1="400" y2="560"><stop offset="0" stop-color="#4a4a4a" stop-opacity="0"/><stop offset="1" stop-color="#4a4a4a"/></linearGradient>
              <linearGradient id="fade-major" gradientUnits="userSpaceOnUse" x1="0" x2="0" y1="335" y2="640"><stop offset="0" stop-color="#4a4a4a" stop-opacity="0"/><stop offset=".3" stop-color="#4b4b4b" stop-opacity=".8"/><stop offset="1" stop-color="#555"/></linearGradient>
              <linearGradient id="fade-y" gradientUnits="userSpaceOnUse" x1="0" x2="0" y1="335" y2="480"><stop offset="0" stop-color="#638c2a" stop-opacity="0"/><stop offset="1" stop-color="#638c2a"/></linearGradient>
            </defs>
            <rect x="0" y="0" width="2400" height="1400" fill="url(#bg)"/>
            <g id="floor"></g>
            <g fill="none" stroke="#0c0c0c">
              <circle cx="1110" cy="416" r="12" stroke-dasharray="4 3"/><circle cx="1110" cy="416" r="8" stroke-dasharray="3 3"/><circle cx="1110" cy="416" r="2.500" stroke-width="1.500"/>
              <path d="M1110 419 1114 570" stroke="#222"/>
              <path d="M1259 497 1268 488 1276 506 1267 516zM1315 484 1259 497M1315 484 1268 488M1315 484 1276 506M1315 484 1267 516" stroke-width="1.200"/>
              <path d="M1258 480 1265.500 490 1259.500 494z" fill="#000"/>
            </g>
            <path d="M979.500 588.500 1034.500 581 1044 602 984.500 611z" fill="#85878a" stroke="#ef8f26" stroke-width="1.800"/>
            <path d="M990 598 1003 597M1018 595 1031 593M1009 577 1010 590M1011 601 1012 614" stroke="#111"/>
            <circle cx="1010.500" cy="595.500" r="10" fill="none" stroke="#eee" stroke-width="1.400"/>
            <circle cx="1010.500" cy="595.500" r="10" fill="none" stroke="#e8383d" stroke-width="1.400" stroke-dasharray="4 4"/>
            <circle cx="1010.500" cy="595.500" r="2.200" fill="#f59a2b"/>
          </svg>
          <div class="bar over">
            <button class="ib" aria-label="3D Viewport"><svg class="i"><use href="#view3d"/></svg><svg class="c"><use href="#chev"/></svg></button>
            <span class="drop mode ko"><svg class="i"><use href="#object"/></svg><select aria-label="모드"><option>오브젝트 모드</option></select><svg class="c"><use href="#chev"/></svg></span>
            <nav class="menu ko"><button>뷰</button><button>선택</button><button>추가</button><button>오브젝트</button></nav>
            <span class="drop orient ko"><svg class="i"><use href="#orient"/></svg><select aria-label="방향"><option>글로벌</option></select><svg class="c"><use href="#chev"/></svg></span>
            <button class="ib" aria-label="피벗"><svg class="i"><use href="#pivot"/></svg><svg class="c"><use href="#chev"/></svg></button>
            <div class="grp">
              <button class="w19 lit faint" aria-label="스냅"><svg class="i"><use href="#magnet"/></svg></button>
              <button class="w31" aria-label="스냅 대상"><svg class="i"><use href="#snapinc"/></svg><svg class="c"><use href="#chev"/></svg></button>
            </div>
            <div class="grp weak">
              <button class="w19 lit faint" aria-label="비례 편집"><svg class="i"><use href="#prop"/></svg></button>
              <button class="w31 faint" aria-label="감쇠"><svg class="i"><use href="#falloff"/></svg><svg class="c fainter"><use href="#chev"/></svg></button>
            </div>
            <button class="ib push" aria-label="표시"><svg class="i"><use href="#eyecur"/></svg><svg class="c"><use href="#chev"/></svg></button>
            <div class="grp"><button class="w19 blue" aria-label="기즈모"><svg class="i"><use href="#gizmo"/></svg></button><button class="w18" aria-label="기즈모 옵션"><svg class="c"><use href="#chev"/></svg></button></div>
            <div class="grp"><button class="w19 blue" aria-label="오버레이"><svg class="i"><use href="#overlay"/></svg></button><button class="w18" aria-label="오버레이 옵션"><svg class="c"><use href="#chev"/></svg></button></div>
            <div class="grp plain"><button class="w19 mid" aria-label="엑스레이"><svg class="i"><use href="#xray"/></svg></button></div>
            <div class="grp">
              <button class="w19 mid" aria-label="와이어프레임"><svg class="i"><use href="#wire"/></svg></button>
              <button class="w19 blue" aria-label="솔리드"><svg class="i"><use href="#solid"/></svg></button>
              <button class="w19 mid" aria-label="매테리얼"><svg class="i"><use href="#matp"/></svg></button>
              <button class="w19 mid" aria-label="렌더"><svg class="i"><use href="#rendered"/></svg></button>
              <button class="w18" aria-label="셰이딩 옵션"><svg class="c"><use href="#chev"/></svg></button>
            </div>
          </div>
          <div class="bar over second">
            <div class="grp plain">
              <button class="w20 blue" aria-label="새로"><svg class="i"><use href="#s-new"/></svg></button>
              <button class="w19 lit soft" aria-label="확장"><svg class="i"><use href="#s-add"/></svg></button>
              <button class="w19 lit soft" aria-label="빼기"><svg class="i"><use href="#s-sub"/></svg></button>
              <button class="w19 lit soft" aria-label="반전"><svg class="i"><use href="#s-inv"/></svg></button>
              <button class="w19 lit soft" aria-label="교차"><svg class="i"><use href="#s-int"/></svg></button>
            </div>
            <button class="ib opt ko push">옵션<svg class="c"><use href="#chev"/></svg></button>
          </div>
          <div class="viewbody">
            <div class="toolbar">
              <div class="tgroup"><button class="on more" aria-label="선택"><svg><use href="#t-sel"/></svg></button><button aria-label="커서"><svg><use href="#t-cur"/></svg></button></div>
              <div class="tgroup"><button aria-label="이동"><svg><use href="#t-move"/></svg></button><button aria-label="회전"><svg><use href="#t-rot"/></svg></button><button class="more" aria-label="축적"><svg><use href="#t-scale"/></svg></button><button aria-label="변환"><svg><use href="#t-xf"/></svg></button></div>
              <div class="tgroup"><button class="more" aria-label="주석"><svg><use href="#t-note"/></svg></button><button aria-label="측정"><svg><use href="#t-meas"/></svg></button></div>
              <div class="tgroup"><button class="more" aria-label="큐브 추가"><svg><use href="#t-cube"/></svg></button></div>
            </div>
            <div class="viewinfo"><p class="ko">사용자 원근법</p><p>(1) Collection | <span class="ko">평면</span></p></div>
            <div class="nav3d">
              <svg class="axes" viewBox="0 0 84 84">
                <path d="M45 45V15" stroke="#2f83e3" stroke-width="2"/><path d="M45 45 75 42" stroke="#c0364a" stroke-width="2"/><path d="M45 45 35 37" stroke="#6b9523" stroke-width="2"/>
                <circle cx="14" cy="49" r="7.500" fill="#69353f" stroke="#d13a50" stroke-width="1.300"/>
                <circle cx="45" cy="76" r="7" fill="#344a66" stroke="#2f6fc0" stroke-width="1.300"/>
                <circle cx="35" cy="37" r="7.500" fill="#6b9523"/>
                <circle cx="55" cy="55" r="7.800" fill="#52702b" stroke="#86d414" stroke-width="1.500"/>
                <circle cx="75" cy="42" r="8" fill="#c0364a"/><circle cx="44" cy="15" r="8.300" fill="#2f83e3"/>
                <g font-size="10" text-anchor="middle" fill="#141414" stroke="#141414" stroke-width=".4"><text x="44" y="19">Z</text><text x="35" y="41">Y</text><text x="75" y="46">X</text></g>
              </svg>
              <button aria-label="줌"><svg><use href="#zoom"/></svg></button>
              <button aria-label="이동"><svg><use href="#hand"/></svg></button>
              <button aria-label="카메라"><svg><use href="#cam"/></svg></button>
              <button aria-label="원근"><svg><use href="#persp"/></svg></button>
            </div>
          </div>
          <button class="flap" aria-label="사이드바"><svg><use href="#chev-l"/></svg></button>
        </section>
      </div>

      <section class="area nodes">
        <div class="bar three">
          <div class="part">
            <button class="ib" aria-label="Geometry Node Editor"><svg class="i"><use href="#geo"/></svg><svg class="c"><use href="#chev"/></svg></button>
            <nav class="menu ko"><button>뷰</button><button>선택</button><button>추가</button><button>노드</button></nav>
          </div>
          <div class="part centre">
            <div class="grp">
              <button class="w31" aria-label="노드 트리"><svg class="i"><use href="#ntree"/></svg><svg class="c"><use href="#chev"/></svg></button>
              <input class="name" aria-label="노드 트리 이름" value="Geometry Nodes">
              <button class="w20 lit dimmer" aria-label="가짜 사용자"><svg class="i"><use href="#shield"/></svg></button>
              <button class="w20 lit" aria-label="복사"><svg class="i"><use href="#copy"/></svg></button>
              <button class="w20 lit" aria-label="연결 해제"><svg class="i"><use href="#x"/></svg></button>
            </div>
            <button class="bare" aria-label="고정"><svg class="i dim"><use href="#pin"/></svg></button>
          </div>
          <div class="part end">
            <div class="grp weak"><button class="w19 mid off" aria-label="상위 트리"><svg class="i"><use href="#parent"/></svg></button></div>
            <div class="grp"><button class="w19 blue" aria-label="스냅"><svg class="i"><use href="#magnet"/></svg></button><button class="w31" aria-label="스냅 대상"><svg class="i"><use href="#gsnap"/></svg><svg class="c"><use href="#chev"/></svg></button></div>
            <div class="grp"><button class="w19 blue" aria-label="오버레이"><svg class="i"><use href="#overlay"/></svg></button><button class="w18" aria-label="오버레이 옵션"><svg class="c"><use href="#chev"/></svg></button></div>
          </div>
        </div>
        <div class="canvas">
          <div class="path">
            <svg class="i"><use href="#object"/></svg><span class="ko">평면</span>
            <svg class="sep"><use href="#chev-r"/></svg>
            <svg class="i"><use href="#geo"/></svg><span>GeometryNodes</span>
            <svg class="sep"><use href="#chev-r"/></svg>
            <svg class="i"><use href="#ntree"/></svg><span>Geometry Nodes</span>
          </div>
          <svg class="links" aria-hidden="true">
            <defs>
              <linearGradient id="g2f" gradientUnits="userSpaceOnUse" x1="397" x2="477" y1="0" y2="0"><stop offset=".3" stop-color="#598c5c"/><stop offset=".8" stop-color="#a1a1a1"/></linearGradient>
            </defs>
            <g fill="none">
              <g stroke="#00d6a3" stroke-width="5">
                <path d="M397 233C427 233 447 393 477 393"/><path d="M757 233H1196"/><path d="M757 233C789 233 805 825 837 825"/>
              </g>
              <g stroke="#a1a1a1" stroke-width="5">
                <path d="M1117 353C1147 353 1166 277 1196 277"/><path d="M1117 397C1147 397 1166 321 1196 321"/><path d="M1117 441C1147 441 1166 365 1196 365"/><path d="M1117 485C1147 485 1166 409 1196 409"/><path d="M1117 529C1147 529 1166 453 1196 453"/><path d="M1117 573C1147 573 1166 497 1196 497"/><path d="M1117 617C1147 617 1166 541 1196 541"/><path d="M1117 661C1147 661 1166 585 1196 585"/>
              </g>
              <path d="M397 473C427 473 447 525 477 525" stroke="#3c4a3d" stroke-width="3"/>
              <path d="M397 473C427 473 447 525 477 525" stroke="url(#g2f)" stroke-width="3" stroke-dasharray="14 6"/>
              <path d="M757 753C787 753 807 913 837 913" stroke="#777" stroke-width="3"/>
              <path d="M757 753C787 753 807 913 837 913" stroke="#eee" stroke-width="3" stroke-dasharray="14 6"/>
            </g>
          </svg>

          <article class="node n-in">
            <h2 class="hd ko"><svg><use href="#chev-thin"/></svg>그룹 입력</h2>
            <div class="row out ko">지오메트리<svg class="k geo"><use href="#k-c"/></svg></div>
            <div class="row out"><svg class="k"><use href="#k-e"/></svg></div>
          </article>

          <article class="node n-store tall">
            <h2 class="hd attr"><svg><use href="#chev-thin"/></svg>Store Named Attrib…</h2>
            <div class="row out ko">지오메트리<svg class="k geo"><use href="#k-c"/></svg></div>
            <div class="drops">
              <span class="nd ko"><select aria-label="데이터 유형"><option>실수</option></select><svg><use href="#chev"/></svg></span>
              <span class="nd ko"><select aria-label="도메인"><option>포인트</option></select><svg><use href="#chev"/></svg></span>
            </div>
            <div class="row in ko"><svg class="k geo"><use href="#k-c"/></svg>지오메트리</div>
            <div class="row in ko"><svg class="k bool"><use href="#k-dd"/></svg>선택</div>
            <label class="row in text"><svg class="k str"><use href="#k-c"/></svg><span class="ko">이름</span><input value="test"></label>
            <div class="row in ko"><svg class="k flt"><use href="#k-d"/></svg>값</div>
          </article>

          <article class="node n-rand">
            <h2 class="hd conv"><svg><use href="#chev-thin"/></svg>Random Value</h2>
            <div class="row out ko">값<svg class="k int"><use href="#k-d"/></svg></div>
            <div class="drops far"><span class="nd"><select aria-label="유형"><option>Integer</option></select><svg><use href="#chev"/></svg></span></div>
            <label class="row num"><svg class="k int"><use href="#k-dd"/></svg><span class="ko">최소</span><input value="0"></label>
            <label class="row num"><svg class="k int"><use href="#k-dd"/></svg><span class="ko">최대</span><input value="10"></label>
            <div class="row in"><svg class="k int"><use href="#k-d"/></svg>ID</div>
            <label class="row num"><svg class="k int"><use href="#k-dd"/></svg><span class="ko">씨드</span><input value="0"></label>
          </article>

          <article class="node n-named picked">
            <h2 class="hd input"><svg><use href="#chev-thin"/></svg>Named Attribute</h2>
            <div class="row out ko">속성<svg class="k flt"><use href="#k-d"/></svg></div>
            <div class="row out ko">존재<svg class="k bool"><use href="#k-d"/></svg></div>
            <div class="drops"><span class="nd ko"><select aria-label="데이터 유형"><option>실수</option></select><svg><use href="#chev"/></svg></span></div>
            <label class="row in text"><svg class="k str"><use href="#k-c"/></svg><span class="ko">이름</span><input value="test"></label>
          </article>

          <article class="node n-stat tall">
            <h2 class="hd attr"><svg><use href="#chev-thin"/></svg>Attribute Statistic</h2>
            <div class="row out ko">평균<svg class="k flt"><use href="#k-c"/></svg></div>
            <div class="row out ko">평균<svg class="k flt"><use href="#k-c"/></svg></div>
            <div class="row out">Sum<svg class="k flt"><use href="#k-c"/></svg></div>
            <div class="row out ko">최소<svg class="k flt"><use href="#k-c"/></svg></div>
            <div class="row out ko">최대<svg class="k flt"><use href="#k-c"/></svg></div>
            <div class="row out ko">범위<svg class="k flt"><use href="#k-c"/></svg></div>
            <div class="row out">Standard Deviation<svg class="k flt"><use href="#k-c"/></svg></div>
            <div class="row out">Variance<svg class="k flt"><use href="#k-c"/></svg></div>
            <div class="drops far">
              <span class="nd ko"><select aria-label="데이터 유형"><option>실수</option></select><svg><use href="#chev"/></svg></span>
              <span class="nd ko"><select aria-label="도메인"><option>포인트</option></select><svg><use href="#chev"/></svg></span>
            </div>
            <div class="row in ko"><svg class="k geo"><use href="#k-c"/></svg>지오메트리</div>
            <div class="row in ko"><svg class="k bool"><use href="#k-dd"/></svg>선택</div>
            <div class="row in ko"><svg class="k flt"><use href="#k-d"/></svg>속성</div>
          </article>

          <article class="node n-out">
            <h2 class="hd ko"><svg><use href="#chev-thin"/></svg>그룹 출력</h2>
            <div class="row in ko"><svg class="k geo"><use href="#k-c"/></svg>지오메트리</div>
            <div class="row in ko"><svg class="k flt"><use href="#k-dd"/></svg>평균</div>
            <div class="row in ko"><svg class="k flt"><use href="#k-dd"/></svg>평균</div>
            <div class="row in"><svg class="k flt"><use href="#k-dd"/></svg>Sum</div>
            <div class="row in ko"><svg class="k flt"><use href="#k-dd"/></svg>최소</div>
            <div class="row in ko"><svg class="k flt"><use href="#k-dd"/></svg>최대</div>
            <div class="row in ko"><svg class="k flt"><use href="#k-dd"/></svg>범위</div>
            <div class="row in"><svg class="k flt"><use href="#k-dd"/></svg>Standard Deviation</div>
            <div class="row in"><svg class="k flt"><use href="#k-dd"/></svg>Variance</div>
            <div class="row in"><svg class="k"><use href="#k-e"/></svg></div>
          </article>

          <div class="tip" role="tooltip">1 (Float).</div>
          <button class="flap nf" aria-label="사이드바"><svg><use href="#chev-l"/></svg></button>
          <button class="flap lf" aria-label="도구"><svg><use href="#chev-r"/></svg></button>
          <div class="cscroll"></div>
        </div>
      </section>
    </div>

    <div class="right">
      <section class="area outliner">
        <div class="bar">
          <button class="ib" aria-label="Outliner"><svg class="i"><use href="#tree"/></svg><svg class="c"><use href="#chev"/></svg></button>
          <button class="ib" aria-label="표시 모드"><svg class="i"><use href="#layers"/></svg><svg class="c"><use href="#chev"/></svg></button>
          <label class="find"><svg class="i"><use href="#search"/></svg><input type="search" aria-label="검색"></label>
          <button class="ib push" aria-label="필터"><svg class="i"><use href="#funnel"/></svg><svg class="c"><use href="#chev"/></svg></button>
          <div class="grp plain"><button class="w19 mid" aria-label="새 컬렉션"><svg class="i"><use href="#newcol"/></svg></button></div>
        </div>
        <ul class="treeview">
          <li class="l0"><span class="bx"><svg class="i"><use href="#coll"/></svg></span><span class="ko">씬 컬렉션</span></li>
          <li class="l1"><svg class="tri"><use href="#tri-d"/></svg><span class="bx hi"><svg class="i"><use href="#coll"/></svg></span><span>Collection</span><span class="acts"><input type="checkbox" checked aria-label="Collection"><button aria-label="보기"><svg class="i"><use href="#eye"/></svg></button><button aria-label="렌더"><svg class="i"><use href="#photo"/></svg></button></span></li>
          <li class="l2"><svg class="tri"><use href="#tri-r"/></svg><span class="bx org"><svg class="i"><use href="#cam"/></svg></span><span>Camera</span><span class="bx hi grn data"><svg class="i"><use href="#cam-o"/></svg></span><span class="acts"><button aria-label="보기"><svg class="i"><use href="#eye"/></svg></button><button aria-label="렌더"><svg class="i"><use href="#photo"/></svg></button></span></li>
          <li class="l2"><svg class="tri"><use href="#tri-r"/></svg><span class="bx org"><svg class="i"><use href="#bulb"/></svg></span><span>Light</span><span class="bx grn data"><svg class="i"><use href="#bulb-o"/></svg></span><span class="acts"><button aria-label="보기"><svg class="i"><use href="#eye"/></svg></button><button aria-label="렌더"><svg class="i"><use href="#photo"/></svg></button></span></li>
          <li class="l2 hid"><svg class="tri"><use href="#tri-r"/></svg><span class="bx org"><svg class="i"><use href="#tri-o"/></svg></span><span class="ko">큐브</span><span class="bx grn data"><svg class="i"><use href="#mesh"/></svg></span><span class="acts"><button aria-label="보기"><svg class="i"><use href="#eye-c"/></svg></button><button aria-label="렌더"><svg class="i"><use href="#photo"/></svg></button></span></li>
          <li class="l2 act"><svg class="tri"><use href="#tri-r"/></svg><span class="bx hi org"><svg class="i"><use href="#tri-o"/></svg></span><span class="ko nm">평면</span><span class="bx blu data"><svg class="i"><use href="#wrench"/></svg></span><span class="bx grn"><svg class="i"><use href="#mesh"/></svg></span><span class="acts"><button aria-label="보기"><svg class="i"><use href="#eye"/></svg></button><button aria-label="렌더"><svg class="i"><use href="#photo"/></svg></button></span></li>
        </ul>
      </section>

      <section class="area props">
        <div class="bar">
          <button class="ib" aria-label="Properties"><svg class="i"><use href="#props"/></svg><svg class="c"><use href="#chev"/></svg></button>
          <label class="find mid-find"><svg class="i"><use href="#search"/></svg><input type="search" aria-label="검색"></label>
          <button class="ib slim push" aria-label="옵션"><svg class="c"><use href="#chev"/></svg></button>
        </div>
        <div class="propbody">
          <nav class="ptabs">
            <div><button aria-label="도구"><svg class="i"><use href="#tools"/></svg></button></div>
            <div><button aria-label="렌더"><svg class="i"><use href="#render"/></svg></button><button aria-label="출력"><svg class="i"><use href="#output"/></svg></button><button aria-label="뷰 레이어"><svg class="i"><use href="#layers"/></svg></button><button aria-label="씬"><svg class="i"><use href="#scene"/></svg></button><button class="red" aria-label="월드"><svg class="i"><use href="#world"/></svg></button></div>
            <div><button class="wht" aria-label="컬렉션"><svg class="i"><use href="#coll-o"/></svg></button></div>
            <div><button class="org" aria-label="오브젝트"><svg class="i"><use href="#object"/></svg></button><button class="on" aria-label="모디파이어"><svg class="i"><use href="#wrench-f"/></svg></button><button class="blu" aria-label="파티클"><svg class="i"><use href="#parts"/></svg></button><button class="blu" aria-label="물리"><svg class="i"><use href="#phys"/></svg></button><button class="blu" aria-label="제약"><svg class="i"><use href="#constr"/></svg></button><button class="grn" aria-label="데이터"><svg class="i"><use href="#mesh"/></svg></button><button class="red" aria-label="매테리얼"><svg class="i"><use href="#mater"/></svg></button></div>
            <div><button class="red" aria-label="텍스처"><svg class="i"><use href="#texture"/></svg></button></div>
          </nav>
          <div class="panelcol">
            <div class="path inpanel">
              <svg class="i"><use href="#object"/></svg><span class="ko">평면</span>
              <svg class="sep"><use href="#chev-r"/></svg>
              <svg class="i"><use href="#geo"/></svg><span>GeometryNodes</span>
              <button class="bare push" aria-label="고정"><svg class="i dim"><use href="#pin"/></svg></button>
            </div>
            <span class="drop wide ko"><select aria-label="모디파이어를 추가"><option>모디파이어를 추가</option></select><svg class="c"><use href="#chev"/></svg></span>
            <div class="modifier">
              <div class="mrow">
                <svg class="big"><use href="#chev"/></svg><svg class="i"><use href="#geo"/></svg>
                <div class="grp plain grow">
                  <input class="name short" aria-label="이름" value="GeometryNo...">
                  <button class="w20 lit" aria-label="케이지"><svg class="i"><use href="#mesh"/></svg></button>
                  <button class="w20 blue" aria-label="에디트 모드"><svg class="i"><use href="#edit"/></svg></button>
                  <button class="w20 blue" aria-label="실시간"><svg class="i"><use href="#monitor"/></svg></button>
                  <button class="w20 blue" aria-label="렌더"><svg class="i"><use href="#photo"/></svg></button>
                  <button class="w19" aria-label="더보기"><svg class="big"><use href="#chev"/></svg></button>
                </div>
                <button class="bare" aria-label="제거"><svg class="i"><use href="#x"/></svg></button>
                <svg class="dots" viewBox="0 0 12 6"><path d="M0 1.500h12M0 4.500h12" stroke="currentColor" stroke-dasharray="1 2"/></svg>
              </div>
              <div class="grp block">
                <button class="w31" aria-label="노드 그룹"><svg class="i"><use href="#ntree"/></svg><svg class="c"><use href="#chev"/></svg></button>
                <input class="name fill" aria-label="노드 그룹 이름" value="Geometry Nodes">
                <button class="w20 lit dimmer" aria-label="가짜 사용자"><svg class="i"><use href="#shield"/></svg></button>
                <button class="w20 lit" aria-label="복사"><svg class="i"><use href="#copy"/></svg></button>
                <button class="w20 lit" aria-label="연결 해제"><svg class="i"><use href="#x"/></svg></button>
              </div>
              <button class="subp"><svg><use href="#chev-r"/></svg>Output Attributes</button>
              <button class="subp"><svg><use href="#chev-r"/></svg>Internal Dependencies</button>
            </div>
          </div>
        </div>
      </section>
    </div>
  </main>

  <footer class="status">
    <svg><use href="#m-l"/></svg><svg><use href="#m-m"/></svg><svg><use href="#m-r"/></svg><span>3.6.5</span>
  </footer>
</div>
<script src="floor.js"></script>
</body>
</html>
```
FILE: floor.js
```js
// Draws the perspective floor grid and the X / Y axes of the 3D viewport.
(function () {
  var NS = 'http://www.w3.org/2000/svg';
  var floor = document.getElementById('floor');

  // World units are tens of grid cells.
  function depth(x, y) { return 1 + 0.1422 * x + 0.4099 * y; }
  function project(x, y) {
    var w = depth(x, y);
    return [(433.6 * x + 375.2 * y + 1010.7) / w, (44.1 * x + 133.3 * y + 595.5) / w];
  }

  function path(segments, stroke, width) {
    var p = document.createElementNS(NS, 'path');
    p.setAttribute('d', segments.join(''));
    p.setAttribute('stroke', stroke);
    p.setAttribute('stroke-width', width);
    p.setAttribute('fill', 'none');
    floor.appendChild(p);
  }

  function segment(alongX, k, far) {
    var near = 0.12;
    var from = alongX ? (near - 1 - 0.4099 * k) / 0.1422 : (near - 1 - 0.1422 * k) / 0.4099;
    from = Math.max(from, -far);
    if (from >= far) { return ''; }
    var a = alongX ? project(from, k) : project(k, from);
    var b = alongX ? project(far, k) : project(k, far);
    return 'M' + a[0].toFixed(1) + ' ' + a[1].toFixed(1) + 'L' + b[0].toFixed(1) + ' ' + b[1].toFixed(1);
  }

  var minor = [], major = [], i;
  for (i = -60; i <= 80; i++) {
    if (i % 10 !== 0) {
      minor.push(segment(true, i / 10, 30), segment(false, i / 10, 30));
    }
  }
  for (i = -30; i <= 30; i++) {
    if (i !== 0) {
      major.push(segment(true, i, 60), segment(false, i, 60));
    }
  }
  path(minor, 'url(#fade-minor)', 1.2);
  path(major, 'url(#fade-major)', 1.4);
  path([segment(true, 0, 30)], '#94353f', 1.6);
  path([segment(false, 0, 60)], 'url(#fade-y)', 1.8);
})();
```
FILE: styles.css
```css
* { box-sizing: border-box; }
html, body { margin: 0; height: 100%; }
body {
  background: #181818;
  color: #dcdcdc;
  font: 10px/16px "DejaVu Sans", "Noto Sans CJK KR", sans-serif;
}
.ko { font-size: 11px; }
h1, h2, p, ul { margin: 0; padding: 0; font-weight: normal; list-style: none; }
button, input, select { font: inherit; color: inherit; margin: 0; padding: 0; border: 0; background: none; border-radius: 0; outline: 0; }
select { appearance: none; }
input[type="search"] { appearance: none; }
button { display: inline-flex; align-items: center; justify-content: center; white-space: nowrap; }
svg { display: block; flex: none; }
.sprite { position: absolute; width: 0; height: 0; }
.i { width: 15px; height: 15px; }
.c { width: 8px; height: 8px; }
.dim { color: #8e8e8e; }
.push { margin-left: auto; }

.app {
  display: flex;
  flex-direction: column;
  height: 100vh;
  min-height: 1100px;
  border: 1px solid #6b6b6b;
  border-bottom-color: #5a5a5a;
}

/* window frame */
.titlebar { display: flex; align-items: center; gap: 4px; height: 30px; padding-left: 9px; background: linear-gradient(90deg, #1e2123, #22211d 60%, #24221d); }
.titlebar h1 { font: 11px/16px "Open Sans", "Noto Sans", sans-serif; color: #fff; }
.winbtns { display: flex; margin-left: auto; }
.winbtns button { width: 46px; height: 30px; }
.winbtns svg { width: 12px; height: 12px; }

.topbar { display: flex; align-items: center; height: 27px; padding-right: 8px; background: #191919; }
.mainmenu { display: flex; gap: 15px; padding-left: 10px; color: #ccc; }
.mainmenu button:first-child { margin-right: -7px; }
.mainmenu .i { width: 17px; height: 17px; }
.tabs { display: flex; align-self: flex-end; margin: 0 0 1px 22px; color: #9a9a9a; }
.tabs button { height: 20px; padding: 0 10px; border-radius: 4px 4px 0 0; }
.tabs .on { background: #303030; color: #fff; }
.tabs svg { width: 10px; height: 10px; }
.tabs .plus { padding: 0 8px; }
.datablocks { display: flex; gap: 6px; margin-left: auto; }

/* shared controls */
.grp { display: flex; height: 20px; border: 1px solid #3d3d3d; border-radius: 4px; background: #282828; overflow: hidden; }
.grp.plain { border: 0; }
.grp.weak { border-color: #333; background: #2c2c2c; }
.grp > button { gap: 2px; height: 100%; }
.w18 { width: 18px; } .w19 { width: 19px; } .w20 { width: 20px; } .w31 { width: 31px; }
.lit { background: #545454; border-left: 1px solid #4a4a4a; }
.mid { background: #474747; color: #b5b5b5; }
.blue { background: #4772b3; color: #fff; }
.faint { color: #a0a0a0; }
.fainter { color: #666; }
.soft { color: #cfcfcf; }
.dimmer { color: #9a9a9a; }
.off { background: #303030; color: #626262; }
.name { width: 100px; padding: 0 7px; background: #1d1d1d; color: #e5e5e5; }
.pinned { background: #1d1d1d; }
.name.long { width: 119px; }
.ib { width: 32px; height: 20px; gap: 1px; border: 1px solid #3d3d3d; border-radius: 4px; background: #282828; }
.ib.slim { width: 20px; }
.ib.opt { width: 45px; gap: 9px; }
.bare { height: 20px; padding: 0 4px; }
.drop { position: relative; display: inline-flex; align-items: center; height: 20px; padding: 0 4px 0 7px; border: 1px solid #3d3d3d; border-radius: 4px; background: #282828; color: #e0e0e0; }
.drop select { flex: 1; min-width: 0; height: 18px; line-height: 16px; }
.eval { width: 97px; }
.mode { width: 109px; gap: 5px; padding-left: 4px; }
.orient { width: 80px; gap: 6px; padding-left: 4px; }
.find { display: flex; align-items: center; width: 111px; height: 20px; margin-left: 14px; padding-left: 4px; border: 1px solid #3d3d3d; border-radius: 4px; background: #1d1d1d; }
.find input { flex: 1; min-width: 0; padding: 0 4px; }
.menu { display: flex; gap: 14px; margin: 0 18px 0 6px; }
.bar { display: flex; align-items: center; gap: 6px; height: 25px; padding: 0 7px; }
.upper .bar, .outliner .bar { height: 26px; }
.crumb { display: flex; align-items: center; gap: 8px; margin: 0 6px 0 2px; }

/* area layout */
.work { flex: 1; min-height: 0; display: flex; gap: 3px; padding: 0 1px; }
.left { flex: 1; min-width: 0; display: grid; grid-template-rows: 915fr 1114fr; gap: 3px; }
.upper { display: grid; grid-template-columns: 681fr 897fr; gap: 4px; min-height: 0; min-width: 0; }
.right { width: 331px; display: grid; grid-template-rows: 651fr 1377fr; gap: 4px; }
.area { position: relative; display: flex; flex-direction: column; min-width: 0; min-height: 0; border-radius: 6px; overflow: hidden; background: #303030; }

/* spreadsheet */
.sheetbody { flex: 1; min-height: 0; display: flex; }
.side { flex: none; width: 158px; padding: 7px 9px 0 7px; }
.domains { border: 1px solid #3b3b3b; border-radius: 4px; background: #282828; padding: 4px; }
.domains li { display: flex; align-items: center; gap: 8px; height: 22px; padding: 0 4px 0 2px; white-space: nowrap; }
.domains .sub { padding-left: 22px; }
.domains .sel { height: 18px; margin: 2px 0; border-radius: 3px; background: #4772b3; }
.domains b { margin-left: auto; font-weight: normal; font-size: 11px; color: #7a7a7a; }
.domains .sel b { color: #b8b8b8; }
.reddot { width: 4px; height: 4px; margin: 24px 0 0 33px; border-radius: 2px; background: #d8261c; }
.tablewrap {
  position: relative;
  flex: 1;
  min-width: 0;
  overflow: hidden;
  background:
    linear-gradient(#1c1c1c, #1c1c1c) 29px 0 / 1px 100% no-repeat,
    linear-gradient(#1c1c1c, #1c1c1c) 209px 0 / 1px 100% no-repeat,
    linear-gradient(#1c1c1c, #1c1c1c) 269px 0 / 1px 100% no-repeat,
    linear-gradient(90deg, rgba(255, 255, 255, .04) 29px, transparent 29px),
    linear-gradient(#303030 20px, #1c1c1c 20px, #1c1c1c 21px, transparent 21px),
    repeating-linear-gradient(#2b2b2b 0 1px, #282828 1px 21px, #2b2b2b 21px 40px);
}
table { border-collapse: collapse; table-layout: fixed; width: 269px; font-size: 11px; color: #bdbdbd; }
th, td { padding: 0 4px 0 0; height: 20px; line-height: 18px; font-weight: normal; text-align: right; }
thead th { height: 22px; padding: 0; text-align: center; font-size: 10px; color: #ccc; }
tbody th { padding-right: 3px; }
.c0 { width: 29px; } .ct { width: 60px; }
.hscroll { position: absolute; left: 36px; right: 6px; bottom: 4px; height: 3px; border-radius: 2px; background: #434343; }
.count { height: 25px; padding: 5px 7px 0 0; text-align: right; }
.flap { position: absolute; right: 0; top: 66px; width: 8px; height: 14px; border-radius: 3px 0 0 3px; background: #282828; color: #999; }
.flap.high { top: 39px; background: #262626; }
.flap svg { width: 7px; height: 9px; }
.flap.nf { top: 15px; }
.flap.lf { left: 0; right: auto; top: 15px; background: #262626; border-radius: 0 3px 3px 0; }

/* 3D viewport */
.scene3d { position: absolute; left: 0; top: 0; width: 100%; height: 100%; }
.over { position: relative; background: rgba(48, 48, 48, .7); }
.upper .over { padding: 0 8px; }
.upper .second { padding: 0 6px 0 44px; }
.viewbody { position: relative; display: flex; padding: 8px 8px 0; }
.toolbar { display: flex; flex-direction: column; gap: 6px; }
.tgroup { display: flex; flex-direction: column; gap: 1px; border-radius: 4px; overflow: hidden; }
.tgroup button { position: relative; width: 38px; height: 34px; background: #272727; }
.tgroup svg { width: 26px; height: 26px; }
.tgroup .on { background: #4772b3; }
.tgroup .more::after { content: ""; position: absolute; right: 2px; bottom: 2px; border: 2px solid transparent; border-right-color: #aaa; border-bottom-color: #aaa; }
.viewinfo { margin-left: 18px; color: #fff; text-shadow: 0 1px 2px #000; }
.viewinfo p { height: 18px; }
.nav3d { display: flex; flex-direction: column; align-items: flex-end; gap: 3px; margin: -4px -2px 0 auto; }
.axes { width: 84px; height: 84px; margin-right: 5px; }
.nav3d button { width: 27px; height: 27px; margin-right: 3px; border-radius: 50%; background: #262626; color: #e5e5e5; }
.nav3d button svg { width: 18px; height: 18px; }

/* node editor */
.nodes { background: #1d1d1d; }
.three { display: grid; grid-template-columns: 1fr auto 1fr; background: #242424; }
.part { display: flex; align-items: center; gap: 6px; }
.part.centre { gap: 2px; margin-right: 18px; }
.part.centre .name { width: 121px; }
.part.end { justify-content: flex-end; }
.canvas {
  position: relative;
  flex: 1;
  min-height: 0;
  overflow: hidden;
  background: #1d1d1d radial-gradient(circle, #2b2b2b 1px, transparent 2px) 17px 23px / 40px 40px;
}
.path { display: flex; align-items: center; gap: 8px; padding: 15px 17px; }
.sep { width: 8px; height: 10px; margin-left: 8px; }
.inpanel { padding: 8px 0 16px; }
.inpanel .bare { padding: 0 1px; }
.links { position: absolute; left: 0; top: 0; width: 100%; height: 100%; }
.node { position: absolute; width: 280px; padding-bottom: 8px; border-radius: 7px; background: #303030; box-shadow: 0 0 0 1px #121212, 0 3px 8px rgba(0, 0, 0, .5); font-size: 21px; color: #e2e2e2; }
.node.tall { padding-bottom: 12px; }
.node.picked { box-shadow: 0 0 0 2px #f0f0f0; }
.n-in { left: 117px; top: 163px; }
.n-store { left: 477px; top: 163px; }
.n-rand { left: 117px; top: 403px; }
.n-named { left: 477px; top: 683px; }
.n-stat { left: 837px; top: 283px; }
.n-out { left: 1196px; top: 163px; }
.hd { display: flex; align-items: center; gap: 9px; height: 42px; margin-bottom: 6px; padding-left: 20px; border-bottom: 2px solid #171717; border-radius: 7px 7px 0 0; background: #1d1d1d; font-size: 21px; white-space: nowrap; }
.hd svg { width: 22px; height: 22px; }
.hd.attr { background: #1d2546; border-bottom-color: #191e35; }
.hd.conv { background: #246283; border-bottom-color: #27404c; }
.hd.input { background: #83314a; border-bottom-color: #4d2532; }
.row { position: relative; display: flex; align-items: center; height: 44px; padding: 0 21px; line-height: 40px; white-space: nowrap; }
.out { justify-content: flex-end; }
.node .ko { font-size: 22px; }
.k { position: absolute; top: 11px; left: -11px; width: 22px; height: 22px; }
.out .k { left: auto; right: -11px; }
.k.geo { color: #00d6a3; } .k.bool { color: #cca6d6; } .k.str { color: #70b2ff; } .k.flt { color: #a1a1a1; } .k.int { color: #598c5c; }
.drops { display: flex; flex-direction: column; gap: 10px; margin: 18px 20px 8px; }
.drops.far { margin-top: 22px; }
.nd { position: relative; display: flex; align-items: center; height: 40px; padding: 0 4px 0 15px; border: 1px solid #3d3d3d; border-radius: 8px; background: #282828; }
.nd select { flex: 1; height: 38px; line-height: 34px; }
.nd svg { width: 16px; height: 16px; }
.text input { width: 135px; height: 40px; margin: 0 0 0 auto; padding: 0 15px; border: 1px solid #3d3d3d; border-radius: 8px; background: #1d1d1d; }
.num { padding: 0 20px; }
.num span { width: 50%; height: 40px; padding-left: 33px; line-height: 38px; border-radius: 8px 0 0 8px; background: #545454; }
.num input { width: 50%; height: 40px; padding-right: 26px; text-align: right; border-radius: 0 8px 8px 0; background: #545454; }
.tip { position: absolute; left: 1069px; top: 524px; width: 122px; height: 52px; padding-left: 13px; line-height: 50px; border: 1px solid #242424; border-radius: 5px; background: #1a1a1a; font-size: 21px; }
.cscroll { position: absolute; left: 8px; right: 8px; bottom: 2px; height: 3px; border-radius: 2px; background: #363636; }

/* outliner */
.outliner { background: #282828; }
.outliner .bar { padding: 0 8px; gap: 5px; }
.treeview { position: relative; flex: 1; background: repeating-linear-gradient(#282828 0 20px, #2b2b2b 20px 40px); }
.treeview::after { content: ""; position: absolute; left: 29px; top: 46px; width: 1px; height: 70px; background: #555; }
.treeview li { display: flex; align-items: center; height: 20px; padding-right: 10px; color: #ccc; }
.bx { display: flex; align-items: center; justify-content: center; width: 20px; height: 18px; margin-right: 4px; border-radius: 4px; }
.bx.hi { background: #585858; }
.data { margin: 0 0 0 19px; }
.l0 { padding-left: 20px; } .l1 { padding-left: 25px; } .l2 { padding-left: 45px; }
.tri { width: 8px; height: 10px; margin-right: 7px; }
.org { color: #d08a50; } .grn { color: #14b590; } .blu { color: #5c80c4; } .red { color: #b8535d; } .wht { color: #ddd; }
.acts { display: flex; align-items: center; margin-left: auto; color: #e0e0e0; }
.acts button { width: 20px; height: 20px; }
.acts input { appearance: none; width: 10px; height: 10px; margin-right: 4px; background: #e0e0e0; position: relative; }
.acts input:checked::after { content: ""; position: absolute; left: 3px; top: 1px; width: 3px; height: 6px; border: solid #222; border-width: 0 2px 2px 0; transform: rotate(40deg); }
.hid > * { opacity: .5; }
.hid .acts { opacity: 1; }
.act { background: #334d80; }
.act .nm { color: #f2a53c; }
.act .bx.hi { background: #6b7ba0; }
.act .blu { color: #6f9bf0; }

/* properties */
.props .bar { padding: 0 8px; }
.mid-find { margin-left: 64px; }
.propbody { flex: 1; min-height: 0; display: flex; }
.ptabs { width: 28px; padding-top: 8px; display: flex; flex-direction: column; gap: 3px; background: #1d1d1d; color: #b0b0b0; }
.ptabs > div { display: flex; flex-direction: column; align-items: flex-end; padding-bottom: 4px; border-bottom: 1px solid #181818; }
.ptabs button { width: 26px; height: 28px; border-radius: 4px 0 0 4px; }
.ptabs .on { background: #303030; color: #6f9bf5; }
.ptabs .grn { color: #00b388; }
.panelcol { flex: 1; min-width: 0; padding: 0 8px 0 9px; }
.wide { display: flex; width: 100%; padding-left: 6px; }
.modifier { margin-top: 9px; padding: 4px 7px 0; height: 110px; border: 1px solid #4772b3; border-radius: 4px; background: #3d3d3d; }
.mrow { display: flex; align-items: center; height: 18px; gap: 4px; }
.mrow .grow { margin-left: 7px; height: 19px; }
.name.short { width: 89px; }
.big { width: 10px; height: 10px; color: #bbb; }
.mrow .bare { padding: 0; }
.dots { width: 12px; height: 6px; margin-left: auto; color: #aaa; }
.block { margin-top: 12px; border: 0; }
.name.fill { flex: 1; min-width: 0; }
.subp { display: flex; justify-content: flex-start; gap: 5px; height: 25px; padding-left: 13px; }
.block + .subp { margin-top: 8px; }
.subp svg { width: 8px; height: 10px; }

.status { display: flex; align-items: center; gap: 199px; height: 20px; padding: 0 12px; background: #191919; color: #9a9a9a; }
.status svg { width: 12px; height: 15px; }
.status span { margin-left: auto; }
```
